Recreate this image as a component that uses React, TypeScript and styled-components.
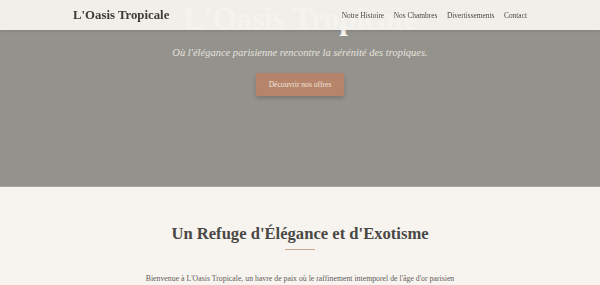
import styled, { createGlobalStyle } from 'styled-components';

const GlobalStyle = createGlobalStyle`
  * { box-sizing: border-box; }
  body {
    margin: 0;
    background: #f7f4ef;
    font-family: 'Liberation Serif', 'DejaVu Serif', serif;
    overflow: hidden;
  }
`;

// 상단 고정 헤더
const Header = styled.header`
  position: fixed;
  top: 0;
  left: 0;
  right: 0;
  height: 30px;
  padding: 0 73px;
  background: rgba(244, 242, 237, 0.96);
  box-shadow: 0 1px 3px rgba(0, 0, 0, 0.12);
  display: flex;
  justify-content: space-between;
  align-items: center;
  z-index: 10;
`;

const Logo = styled.div`
  font-family: 'Liberation Serif', serif;
  font-weight: bold;
  font-size: 12.8px;
  color: #3d3b38;
`;

const Nav = styled.nav`
  display: flex;
  gap: 9.5px;
`;

const NavLink = styled.a`
  font-family: 'Liberation Serif', serif;
  font-size: 7.4px;
  color: #4a4845;
  text-decoration: none;
`;

// 히어로 영역
const Hero = styled.section`
  height: 187px;
  background: #94928d;
  display: flex;
  flex-direction: column;
  align-items: center;
  padding-top: 1px;
  border-bottom: 1px solid #a9a59d;
`;

const HeroTitle = styled.h1`
  margin: 0;
  font-family: 'Liberation Serif', serif;
  font-weight: bold;
  font-size: 31px;
  line-height: 36px;
  color: #f7f5f0;
`;

const HeroSubtitle = styled.p`
  margin: 10px 0 0;
  font-style: italic;
  font-size: 10.5px;
  color: #e6e3dd;
`;

const HeroButton = styled.button`
  margin-top: 15px;
  width: 88px;
  height: 23px;
  border: 0;
  border-radius: 2px;
  background: #b5846a;
  color: #f3e6da;
  font-family: 'Liberation Serif', serif;
  font-size: 7.6px;
  box-shadow: 0 2px 4px rgba(0, 0, 0, 0.2);
`;

// 소개 영역
const Intro = styled.section`
  display: flex;
  flex-direction: column;
  align-items: center;
  padding-top: 35px;
`;

const IntroTitle = styled.h2`
  margin: 0;
  font-family: 'Liberation Serif', serif;
  font-weight: bold;
  font-size: 16.6px;
  line-height: 24px;
  color: #4a4845;
`;

const Divider = styled.div`
  width: 30px;
  height: 1px;
  margin-top: 3px;
  background: #c8ab90;
`;

const IntroText = styled.p`
  margin: 24px 0 0;
  font-size: 7.8px;
  color: #5f5c58;
`;

export default function App() {
  return (
    <>
      <GlobalStyle />
      <Header>
        <Logo>L'Oasis Tropicale</Logo>
        <Nav>
          <NavLink>Notre Histoire</NavLink>
          <NavLink>Nos Chambres</NavLink>
          <NavLink>Divertissements</NavLink>
          <NavLink>Contact</NavLink>
        </Nav>
      </Header>
      <Hero>
        <HeroTitle>L'Oasis Tropicale</HeroTitle>
        <HeroSubtitle>Où l'élégance parisienne rencontre la sérénité des tropiques.</HeroSubtitle>
        <HeroButton>Découvrir nos offres</HeroButton>
      </Hero>
      <Intro>
        <IntroTitle>Un Refuge d'Élégance et d'Exotisme</IntroTitle>
        <Divider />
        <IntroText>
          Bienvenue à L'Oasis Tropicale, un havre de paix où le raffinement intemporel de l'âge d'or parisien
        </IntroText>
      </Intro>
    </>
  );
}
